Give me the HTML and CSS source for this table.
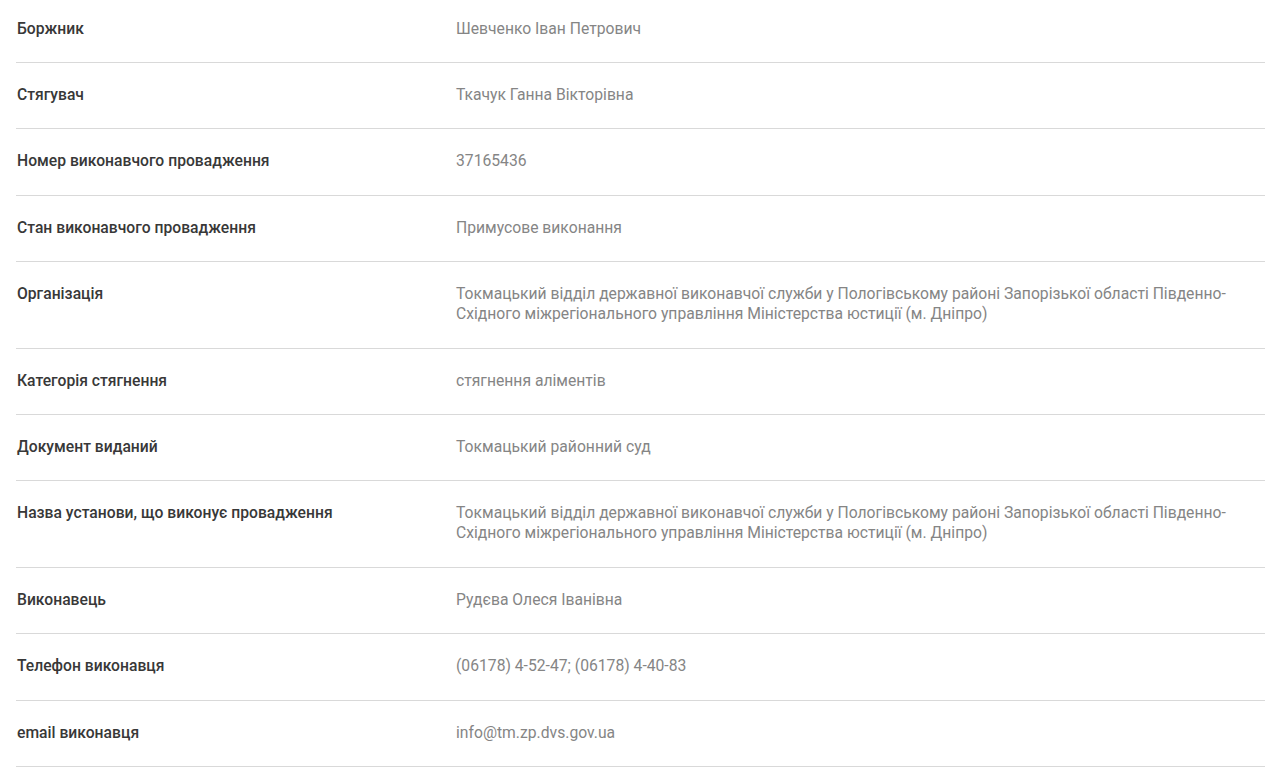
FILE: index.html
```html
<!DOCTYPE html>
<html lang="uk">
<head>
<meta charset="utf-8">
<link rel="stylesheet" href="styles.css">
</head>
<body>
<div class="table">
  <div class="row"><div class="label">Боржник</div><div class="value">Шевченко Іван Петрович</div></div>
  <div class="row"><div class="label">Стягувач</div><div class="value">Ткачук Ганна Вікторівна</div></div>
  <div class="row"><div class="label">Номер виконавчого провадження</div><div class="value">37165436</div></div>
  <div class="row"><div class="label">Стан виконавчого провадження</div><div class="value">Примусове виконання</div></div>
  <div class="row"><div class="label">Організація</div><div class="value">Токмацький відділ державної виконавчої служби у Пологівському районі Запорізької області Південно-Східного міжрегіонального управління Міністерства юстиції (м. Дніпро)</div></div>
  <div class="row"><div class="label">Категорія стягнення</div><div class="value">стягнення аліментів</div></div>
  <div class="row"><div class="label">Документ виданий</div><div class="value">Токмацький районний суд</div></div>
  <div class="row"><div class="label">Назва установи, що виконує провадження</div><div class="value">Токмацький відділ державної виконавчої служби у Пологівському районі Запорізької області Південно-Східного міжрегіонального управління Міністерства юстиції (м. Дніпро)</div></div>
  <div class="row"><div class="label">Виконавець</div><div class="value">Рудєва Олеся Іванівна</div></div>
  <div class="row"><div class="label">Телефон виконавця</div><div class="value">(06178) 4-52-47; (06178) 4-40-83</div></div>
  <div class="row"><div class="label">email виконавця</div><div class="value">info@tm.zp.dvs.gov.ua</div></div>
</div>
</body>
</html>
```

FILE: styles.css
```css
html, body {
  margin: 0;
  padding: 0;
  background: #ffffff;
}
.table {
  margin: -3.4px 16px 0 16px;
  width: 1249px;
}
.row {
  display: flex;
  padding: 22px 0 23.4px;
  border-bottom: 1px solid #d9d9d9;
  line-height: 20px;
}
.label {
  width: 440px;
  flex: none;
  padding-left: 1px;
  box-sizing: border-box;
  font-family: Roboto, "Noto Sans", sans-serif;
  font-weight: 500;
  font-size: 15.7px;
  color: #383838;
}
.value {
  width: 785px;
  flex: none;
  font-family: Roboto, "Noto Sans", sans-serif;
  font-weight: 400;
  font-size: 15.7px;
  color: #858585;
}
```
